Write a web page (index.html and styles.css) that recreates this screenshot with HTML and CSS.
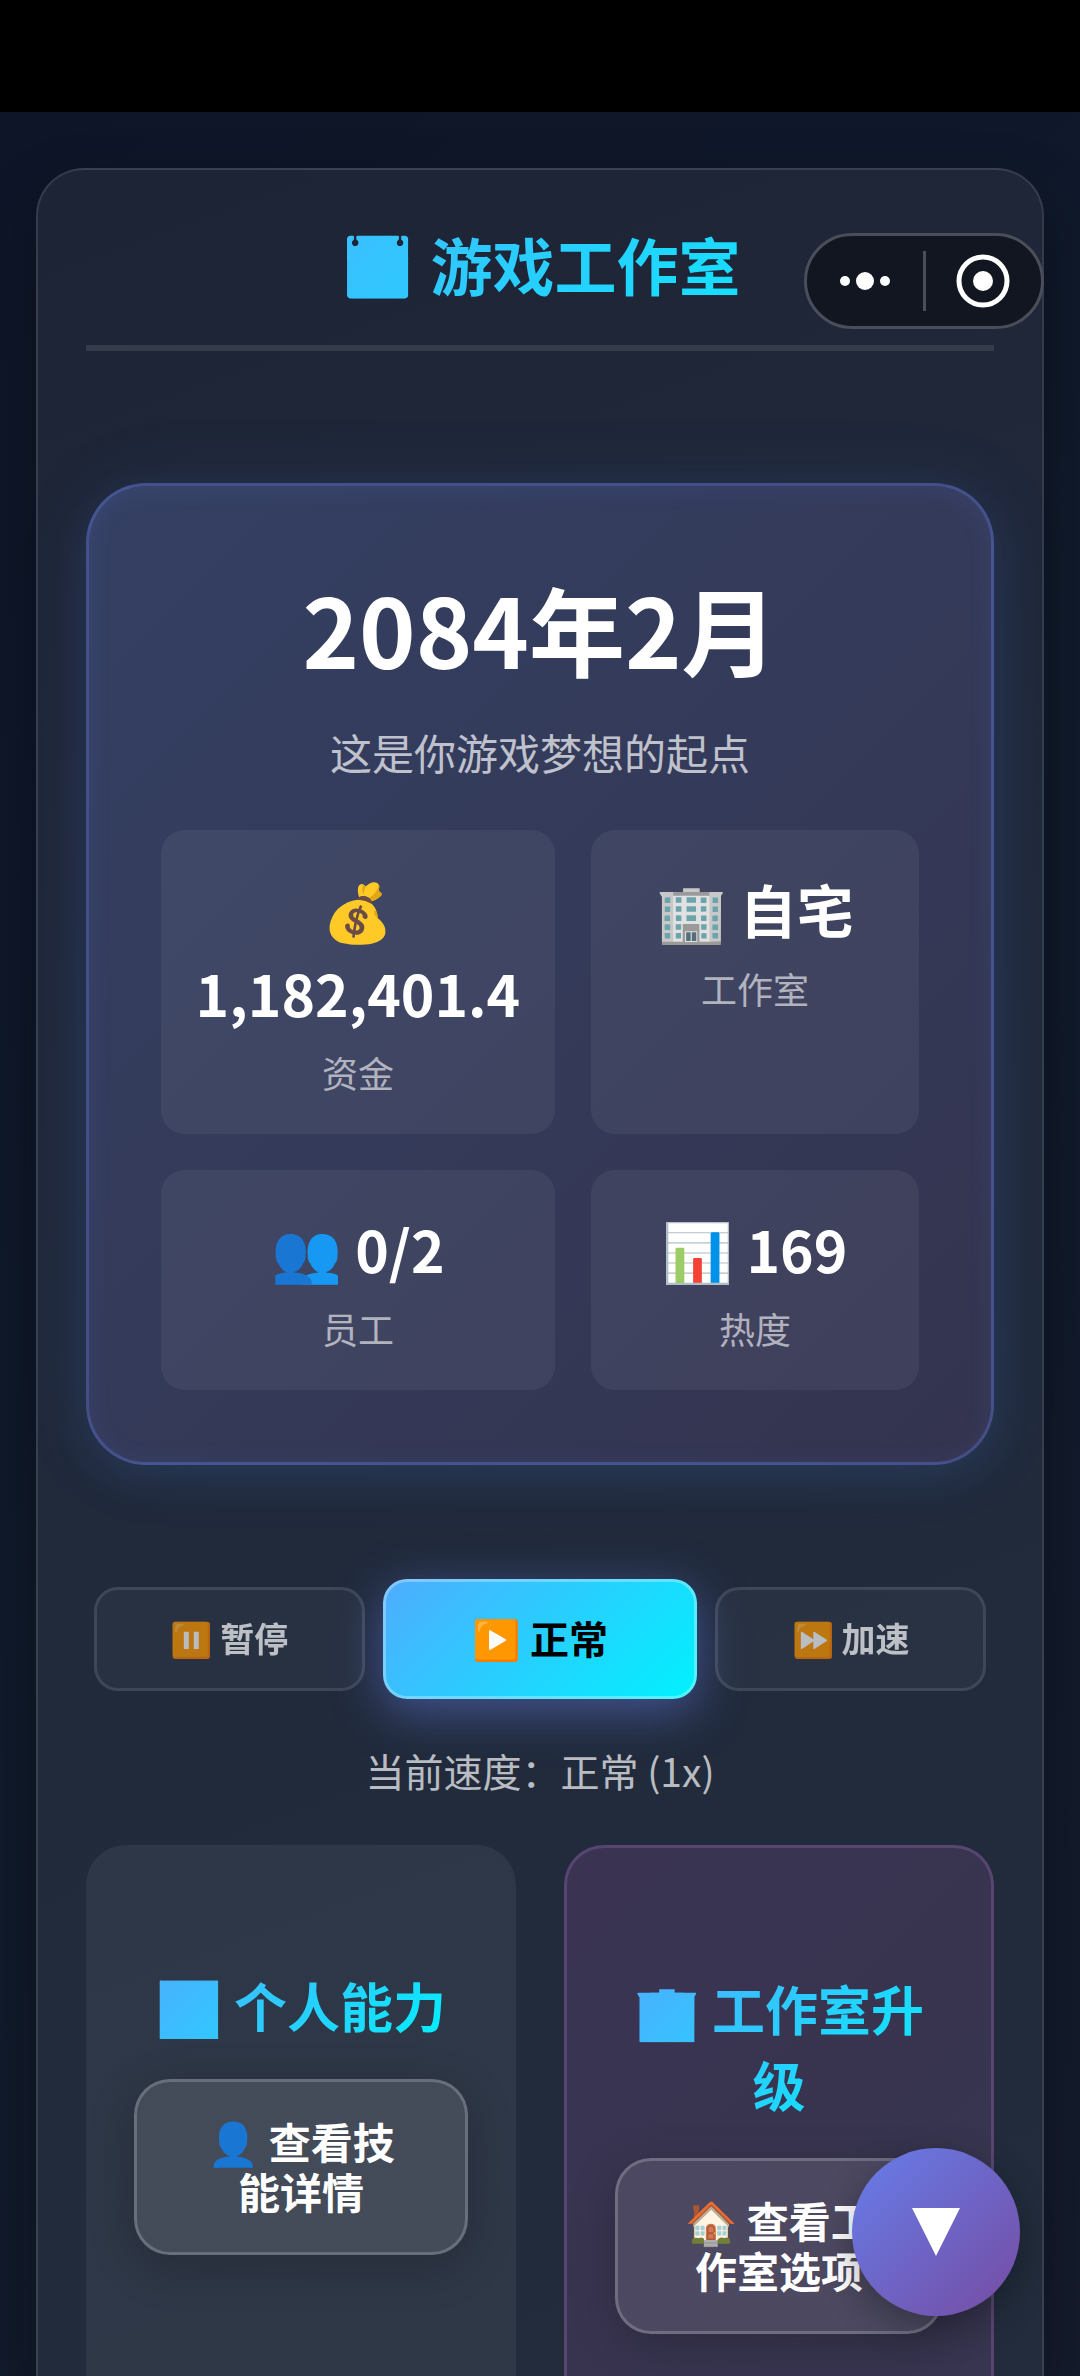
FILE: index.html
```html
<!DOCTYPE html>
<html lang="zh-CN">
<head>
    <meta charset="UTF-8">
    <meta name="viewport" content="width=device-width, initial-scale=1.0">
    <title>游戏工作室</title>
    <link rel="stylesheet" href="styles.css">
</head>
<body>
    <div class="status-bar"></div>

    <div class="container">
        <div class="header">
            <h1 class="gradient-text">📅 游戏工作室</h1>
        </div>

        <div class="hero">
            <h2 class="hero-date">2084年2月</h2>
            <p class="hero-subtitle">这是你游戏梦想的起点</p>
            <div class="stats">
                <div class="stat">
                    <div class="stat-value">💰 1,182,401.4</div>
                    <div class="stat-label">资金</div>
                </div>
                <div class="stat">
                    <div class="stat-value">🏢 自宅</div>
                    <div class="stat-label">工作室</div>
                </div>
                <div class="stat">
                    <div class="stat-value">👥 0/2</div>
                    <div class="stat-label">员工</div>
                </div>
                <div class="stat">
                    <div class="stat-value">📊 169</div>
                    <div class="stat-label">热度</div>
                </div>
            </div>
        </div>

        <div class="speed-controls">
            <button type="button" class="speed-btn">⏸️ 暂停</button>
            <button type="button" class="speed-btn active">▶️ 正常</button>
            <button type="button" class="speed-btn">⏩ 加速</button>
        </div>
        <p class="speed-text">当前速度：正常 (1x)</p>

        <div class="cards">
            <div class="card">
                <h3 class="gradient-text">📊 个人能力</h3>
                <button type="button" class="card-btn">👤 查看技能详情</button>
            </div>
            <div class="card upgrade">
                <h3 class="gradient-text">🏢 工作室升级</h3>
                <button type="button" class="card-btn">🏠 查看工作室选项</button>
            </div>
        </div>
    </div>

    <!-- Mini program menu -->
    <div class="capsule">
        <button type="button" class="capsule-btn" aria-label="更多">
            <svg width="52" height="20" viewBox="0 0 52 20" fill="#fff">
                <circle cx="6" cy="10" r="5"/>
                <circle cx="26" cy="10" r="9"/>
                <circle cx="46" cy="10" r="5"/>
            </svg>
        </button>
        <span class="capsule-line"></span>
        <button type="button" class="capsule-btn" aria-label="关闭">
            <svg width="54" height="54" viewBox="0 0 54 54">
                <circle cx="27" cy="27" r="24" fill="none" stroke="#fff" stroke-width="5"/>
                <circle cx="27" cy="27" r="10" fill="#fff"/>
            </svg>
        </button>
    </div>

    <button type="button" class="scroll-btn" aria-label="向下滚动">
        <svg width="48" height="50" viewBox="0 0 48 50"><path d="M0 1h48L24 49z" fill="#fff"/></svg>
    </button>
</body>
</html>
```
FILE: styles.css
```css
* {
    box-sizing: border-box;
    margin: 0;
    padding: 0;
}
body {
    display: flex;
    flex-direction: column;
    min-height: 100vh;
    font-family: "Noto Sans CJK SC", sans-serif;
    color: #ffffff;
    background: linear-gradient(135deg, #0e1528 0%, #101a2b 50%, #141b2c 100%);
}
button {
    font-family: inherit;
    cursor: pointer;
}
.status-bar {
    height: 112px;
    background-color: #000000;
}
.container {
    flex: 1;
    display: flex;
    flex-direction: column;
    margin: 56px 36px 0;
    padding: 48px 48px 0;
    border: 2px solid rgba(255,255,255,0.1);
    border-bottom: none;
    border-radius: 48px 48px 0 0;
    background: linear-gradient(160deg, #1d2435 0%, #20283a 30%, #212b3c 70%, #222c3c 100%);
    box-shadow: 0 24px 60px rgba(0,0,0,0.3);
}
.gradient-text {
    background: linear-gradient(135deg, #4facfe 0%, #00f2fe 100%);
    -webkit-background-clip: text;
    background-clip: text;
    color: transparent;
    text-align: center;
}
.header {
    padding-bottom: 35px;
    border-bottom: 6px solid rgba(255,255,255,0.1);
}
.header h1 {
    font-size: 62px;
    line-height: 92px;
}
.hero {
    margin-top: 132px;
    padding: 82px 72px 72px;
    border: 3px solid rgba(102,126,234,0.35);
    border-radius: 60px;
    background: linear-gradient(135deg, #344063 0%, #343a59 50%, #34344f 100%);
    box-shadow: 0 0 72px rgba(79,130,220,0.1), 0 12px 40px rgba(79,130,220,0.12), inset 0 3px 24px rgba(102,126,234,0.12);
    text-align: center;
}
.hero-date {
    font-size: 96px;
    line-height: 120px;
}
.hero-subtitle {
    margin-top: 34px;
    font-size: 42px;
    line-height: 60px;
    color: rgba(255,255,255,0.7);
}
.stats {
    display: grid;
    grid-template-columns: 6fr 5fr;
    gap: 36px;
    margin-top: 48px;
}
.stat {
    padding: 36px 34px;
    border-radius: 24px;
    background-color: rgba(255,255,255,0.06);
}
.stat-value {
    font-size: 57px;
    line-height: 84px;
    font-weight: 600;
}
.stat-label {
    margin-top: 12px;
    font-size: 36px;
    line-height: 52px;
    color: rgba(255,255,255,0.6);
}
.speed-controls {
    display: flex;
    justify-content: center;
    align-items: center;
    gap: 18px;
    margin-top: 114px;
    padding: 0 8px;
}
.speed-btn {
    flex: 6;
    height: 104px;
    padding-bottom: 4px;
    border: 3px solid rgba(255,255,255,0.15);
    border-radius: 24px;
    background-color: rgba(255,255,255,0.05);
    color: #ffffff;
    font-size: 34px;
    font-weight: 600;
    opacity: 0.7;
}
.speed-btn.active {
    flex: 7;
    height: 120px;
    border-color: rgba(255,255,255,0.3);
    background: linear-gradient(135deg, #4facfe 0%, #00f2fe 100%) border-box;
    box-shadow: 0 12px 48px rgba(102,126,234,0.5);
    color: #000000;
    font-size: 39px;
    opacity: 1;
}
.speed-text {
    margin-top: 42px;
    font-size: 39px;
    line-height: 58px;
    text-align: center;
    color: rgba(255,255,255,0.7);
}
.cards {
    flex: 1;
    display: grid;
    grid-template-columns: 1fr 1fr;
    gap: 48px;
    margin-top: 46px;
}
.card {
    padding: 122px 48px 0;
    border-radius: 40px 40px 0 0;
    background-color: rgba(255,255,255,0.06);
}
.card.upgrade {
    border: 3px solid rgba(160,110,190,0.3);
    border-bottom: none;
    background: linear-gradient(135deg, #3a3452 0%, #37354f 100%);
}
.card h3 {
    font-size: 53px;
    line-height: 76px;
    font-weight: 600;
}
.card-btn {
    width: 100%;
    margin-top: 36px;
    padding: 34px 60px 36px;
    border: 3px solid rgba(255,255,255,0.2);
    border-radius: 36px;
    background-color: rgba(255,255,255,0.1);
    box-shadow: 0 12px 48px rgba(0,0,0,0.2);
    color: #ffffff;
    font-size: 42px;
    line-height: 50px;
    font-weight: 600;
}
.capsule {
    position: absolute;
    top: 233px;
    right: 36px;
    display: flex;
    align-items: center;
    width: 240px;
    height: 96px;
    border: 3px solid #4a4e5a;
    border-radius: 48px;
    background-color: #121620;
}
.capsule-btn {
    flex: 1;
    display: flex;
    justify-content: center;
    border: none;
    background: none;
}
.capsule-line {
    width: 3px;
    height: 60px;
    background-color: #4a4e5a;
}
.scroll-btn {
    position: fixed;
    right: 60px;
    bottom: 60px;
    display: flex;
    justify-content: center;
    align-items: center;
    width: 168px;
    height: 168px;
    border: none;
    border-radius: 50%;
    background: linear-gradient(135deg, #667eea 0%, #764ba2 100%);
    box-shadow: 0 12px 36px rgba(0,0,0,0.3);
}
```
